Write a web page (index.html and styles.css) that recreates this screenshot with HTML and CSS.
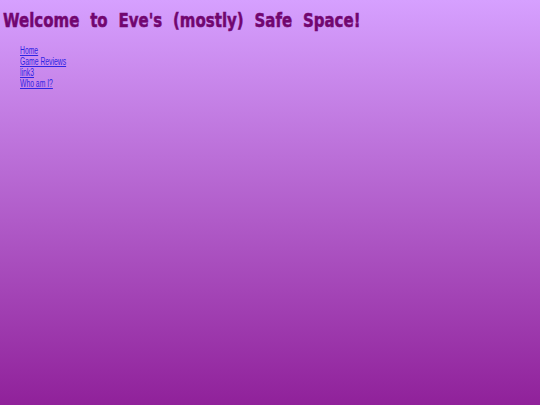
FILE: index.html
```html
<!DOCTYPE html>
<html lang="en">
<head>
<meta charset="utf-8">
<title>Eve's Safe Space</title>
<link rel="stylesheet" href="styles.css">
</head>
<body>
<h1 class="title">Welcome to Eve's (mostly) Safe Space!</h1>
<ul class="nav">
<li><a href="#">Home</a></li>
<li><a href="#">Game Reviews</a></li>
<li><a href="#">link3</a></li>
<li><a href="#">Who am I?</a></li>
</ul>
</body>
</html>
```
FILE: styles.css
```css
html, body {
  margin: 0;
  height: 100%;
}
body {
  background: linear-gradient(to bottom, #d6a0ff 0%, #90219a 100%);
  overflow: hidden;
}
.title {
  margin: 0;
  padding: 10px 0 0 3px;
  font: bold 15px/22px "DejaVu Sans", sans-serif;
  word-spacing: 5.6px;
  color: #720670;
  -webkit-text-stroke: 0.4px #720670;
  white-space: nowrap;
  transform: scaleY(1.25);
  transform-origin: 0 21px;
}
.nav {
  margin: 13px 0 0;
  padding: 0 0 0 20px;
  list-style: none;
  font: 10px/11px "Liberation Sans", Arial, sans-serif;
  transform: scaleX(0.68);
  transform-origin: 20px 0;
}
.nav a {
  color: #2f24e4;
}
```
